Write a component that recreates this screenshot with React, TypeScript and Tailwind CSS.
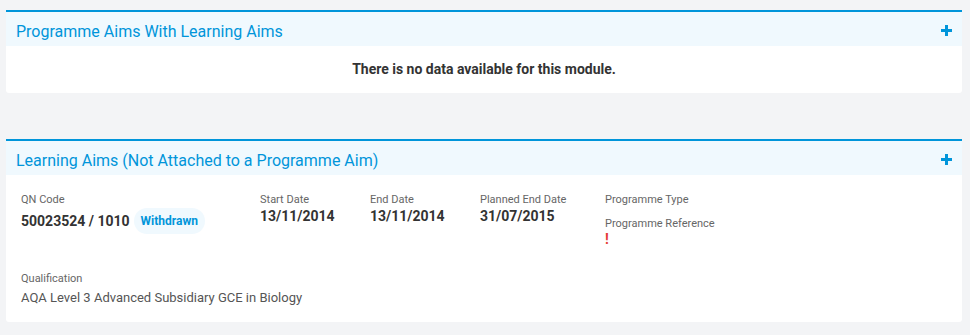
import React from 'react';

const Plus: React.FC = () => (
  <svg width="11" height="11" viewBox="0 0 11 11" className="text-[#0095da] mt-[2px]">
    <rect x="4" y="0" width="3" height="11" fill="currentColor" />
    <rect x="0" y="4" width="11" height="3" fill="currentColor" />
  </svg>
);

const PanelHeader: React.FC<{ title: string }> = ({ title }) => (
  <div className="h-[34px] bg-[#f0f9fe] flex items-center justify-between pl-[10px] pr-[10px]">
    <h2 className="mt-[6px] text-[16px] text-[#0095da] leading-none">{title}</h2>
    <Plus />
  </div>
);

const Field: React.FC<{ label: string; children?: React.ReactNode }> = ({ label, children }) => (
  <div>
    <div className="text-[11px] leading-[14px] text-[#666]">{label}</div>
    {children}
  </div>
);

const App: React.FC = () => {
  return (
    <div className="min-h-[335px] bg-[#f3f4f6] pt-[10px] pl-[6px] pr-[8px] font-['Roboto',sans-serif]">
      <section className="border-t-2 border-[#0095da] bg-white rounded-b-[3px]">
        <PanelHeader title="Programme Aims With Learning Aims" />
        <div className="h-[47px] flex items-center justify-center text-[14px] font-bold text-[#333]">
          There is no data available for this module.
        </div>
      </section>

      <section className="mt-[46px] border-t-2 border-[#0095da] bg-white rounded-b-[3px]">
        <PanelHeader title="Learning Aims (Not Attached to a Programme Aim)" />
        <div className="h-[147px] pt-[18px] pl-[15px]">
          <div className="flex">
            <div className="w-[239px]">
              <Field label="QN Code">
                <div className="mt-[1px] flex items-center gap-[4px]">
                  <span className="text-[14px] font-bold text-[#333]">50023524 / 1010</span>
                  <span className="h-[26px] px-[7px] rounded-full bg-[#f0f9fe] text-[12px] font-bold text-[#0095da] flex items-center">
                    Withdrawn
                  </span>
                </div>
              </Field>
            </div>
            <div className="w-[110px]">
              <Field label="Start Date">
                <div className="text-[14px] font-bold text-[#333] leading-[18px]">13/11/2014</div>
              </Field>
            </div>
            <div className="w-[110px]">
              <Field label="End Date">
                <div className="text-[14px] font-bold text-[#333] leading-[18px]">13/11/2014</div>
              </Field>
            </div>
            <div className="w-[125px]">
              <Field label="Planned End Date">
                <div className="text-[14px] font-bold text-[#333] leading-[18px]">31/07/2015</div>
              </Field>
            </div>
            <div>
              <Field label="Programme Type" />
              <div className="mt-[10px]">
                <Field label="Programme Reference">
                  <div className="text-[14px] font-bold text-[#e53935] leading-[16px]">!</div>
                </Field>
              </div>
            </div>
          </div>
          <div className="mt-[25px]">
            <Field label="Qualification">
              <div className="mt-[4px] text-[13px] text-[#555] leading-[16px]">
                AQA Level 3 Advanced Subsidiary GCE in Biology
              </div>
            </Field>
          </div>
        </div>
      </section>
    </div>
  );
};

export default App;
